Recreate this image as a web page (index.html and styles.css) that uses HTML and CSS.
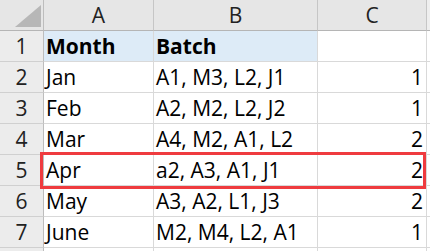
FILE: index.html
```html
<!DOCTYPE html>
<html>
<head>
<meta charset="utf-8">
<link rel="stylesheet" href="styles.css">
</head>
<body>
<div class="wrap">
  <div class="sheet">
    <div class="corner"><span class="tri"></span></div>
    <div class="colhead">A</div>
    <div class="colhead">B</div>
    <div class="colhead">C</div>
    <div class="colhead extra"></div>

    <div class="rowhead">1</div>
    <div class="cell hl bold">Month</div>
    <div class="cell hl bold">Batch</div>
    <div class="cell"></div>
    <div class="cell extra"></div>

    <div class="rowhead">2</div>
    <div class="cell">Jan</div>
    <div class="cell">A1, M3, L2, J1</div>
    <div class="cell num">1</div>
    <div class="cell extra"></div>

    <div class="rowhead">3</div>
    <div class="cell">Feb</div>
    <div class="cell">A2, M2, L2, J2</div>
    <div class="cell num">1</div>
    <div class="cell extra"></div>

    <div class="rowhead">4</div>
    <div class="cell">Mar</div>
    <div class="cell">A4, M2, A1, L2</div>
    <div class="cell num">2</div>
    <div class="cell extra"></div>

    <div class="rowhead">5</div>
    <div class="cell">Apr</div>
    <div class="cell">a2, A3, A1, J1</div>
    <div class="cell num">2</div>
    <div class="cell extra"></div>

    <div class="rowhead">6</div>
    <div class="cell">May</div>
    <div class="cell">A3, A2, L1, J3</div>
    <div class="cell num">2</div>
    <div class="cell extra"></div>

    <div class="rowhead">7</div>
    <div class="cell">June</div>
    <div class="cell">M2, M4, L2, A1</div>
    <div class="cell num">1</div>
    <div class="cell extra"></div>

    <div class="rowhead stub"></div>
    <div class="cell stub"></div>
    <div class="cell stub"></div>
    <div class="cell stub"></div>
    <div class="cell extra stub"></div>
  </div>
  <div class="mark"></div>
</div>
</body>
</html>
```
FILE: styles.css
```css
html, body {
  margin: 0;
  padding: 0;
  background: #ffffff;
}
body {
  width: 430px;
  height: 251px;
  overflow: hidden;
  font-family: "Open Sans", "Noto Sans", sans-serif;
  font-size: 21px;
  color: #000;
}
.wrap {
  position: relative;
}
.sheet {
  display: grid;
  grid-template-columns: 44px 110px 164px 109px 1fr;
  grid-template-rows: repeat(8, 31px) 3px;
}
.sheet > div {
  box-sizing: border-box;
  border-right: 1px solid #d9d9d9;
  border-bottom: 1px solid #d9d9d9;
  display: flex;
  align-items: flex-end;
  line-height: 1;
  white-space: nowrap;
  overflow: hidden;
}
.sheet > .stub {
  border-bottom: none;
}
.corner {
  background: #e6e6e6;
  position: relative;
  border-right-color: #bdbdbd !important;
  border-bottom-color: #b5b5b5 !important;
}
.tri {
  position: absolute;
  right: 2px;
  bottom: 3px;
  width: 0;
  height: 0;
  border-left: 26px solid transparent;
  border-bottom: 22px solid #b7b7b7;
}
.colhead {
  background: #e6e6e6;
  justify-content: center;
  color: #222;
  border-right-color: #c6c6c6 !important;
  border-bottom-color: #b5b5b5 !important;
  padding-bottom: 4px;
}
.colhead.extra {
  background: #eeeeee;
  border-right: none !important;
}
.rowhead {
  background: #ececec;
  justify-content: center;
  color: #222;
  border-right-color: #bdbdbd !important;
  border-bottom-color: #d0d0d0 !important;
  padding-bottom: 4px;
}
.cell {
  padding-left: 2px;
  padding-right: 3px;
  padding-bottom: 4px;
}
.cell.extra {
  border-right: none !important;
}
.hl {
  background: #ddebf7;
}
.bold {
  font-weight: 700;
}
.num {
  justify-content: flex-end;
}
.mark {
  position: absolute;
  left: 40px;
  top: 152px;
  width: 386px;
  height: 37px;
  box-sizing: border-box;
  border: 3px solid #ef3b3f;
}
```
